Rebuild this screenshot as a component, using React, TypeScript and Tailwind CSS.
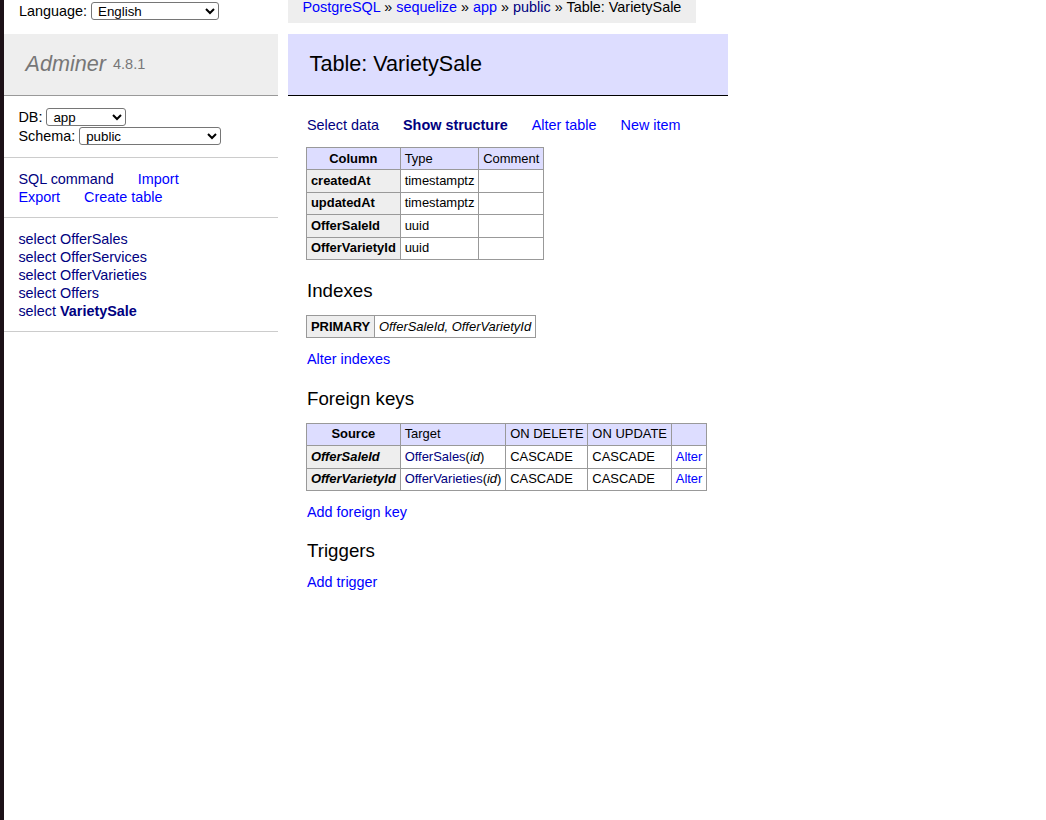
const tables = ["OfferSales", "OfferServices", "OfferVarieties", "Offers"];

const columns = [
  { name: "createdAt", type: "timestamptz" },
  { name: "updatedAt", type: "timestamptz" },
  { name: "OfferSaleId", type: "uuid" },
  { name: "OfferVarietyId", type: "uuid" },
];

const foreignKeys = [
  { source: "OfferSaleId", target: "OfferSales" },
  { source: "OfferVarietyId", target: "OfferVarieties" },
];

const cell = "border border-[#999] px-[3.9px] py-[2.6px] leading-[16.2px]";
const headCell = "border border-[#999] px-[6.5px] py-[2.6px] leading-[16.2px] bg-[#ddf]";
const select =
  "h-[18px] border border-[#767676] rounded-[3px] bg-white text-[13.33px] leading-[16px] pl-[2px] text-black";

export default function App() {
  return (
    <div
      className="flex min-h-[820px] bg-white text-[14.4px] leading-[18px] text-black"
      style={{ fontFamily: '"Liberation Sans", Arial, sans-serif' }}
    >
      <div className="w-[4px] shrink-0 bg-[#1c1117]" />

      {/* menu */}
      <aside className="w-[274px] shrink-0">
        <div className="h-[34px] pl-[15px] pt-[2px]">
          <label className="flex h-[18px] items-center gap-[4px]">
            Language:
            <select className={`${select} w-[128px]`} defaultValue="en">
              <option value="en">English</option>
            </select>
          </label>
        </div>
        <h1 className="flex h-[62px] items-center border-b border-[#999] bg-[#eee] px-[21.6px] pb-[1px] text-[21.6px] font-normal italic text-[#777]">
          Adminer
          <span className="ml-[7px] text-[14.47px] not-italic">4.8.1</span>
        </h1>
        <div className="border-b border-[#ccc] px-[14.4px] py-[11.5px] leading-[19px]">
          <div className="flex items-center gap-[4px]">
            DB:
            <select className={`${select} w-[80px]`} defaultValue="app">
              <option value="app">app</option>
            </select>
          </div>
          <div className="flex items-center gap-[4px]">
            Schema:
            <select className={`${select} w-[142px]`} defaultValue="public">
              <option value="public">public</option>
            </select>
          </div>
        </div>
        <div className="border-b border-[#ccc] px-[14.4px] py-[11.5px]">
          <div>
            <a className="mr-[24px] text-[#000080]">SQL command</a>
            <a className="text-[#00f]">Import</a>
          </div>
          <div>
            <a className="mr-[24px] text-[#00f]">Export</a>
            <a className="text-[#00f]">Create table</a>
          </div>
        </div>
        <div className="border-b border-[#ccc] px-[14.4px] py-[11.5px] text-[#000080]">
          {tables.map((t) => (
            <div key={t}>
              <a>select </a>
              <a>{t}</a>
            </div>
          ))}
          <div>
            <a>select </a>
            <a className="font-bold">VarietySale</a>
          </div>
        </div>
      </aside>

      <div className="w-[10px] shrink-0" />

      {/* content */}
      <main className="w-[440px] shrink-0">
        <div className="h-[23px] w-fit bg-[#eee] px-[14.4px] leading-[14px] whitespace-nowrap">
          <a className="text-[#00f]">PostgreSQL</a> » <a className="text-[#00f]">sequelize</a> »{" "}
          <a className="text-[#00f]">app</a> » <a className="text-[#000080]">public</a> » Table: VarietySale
        </div>
        <h2 className="mt-[11px] flex h-[62px] items-center border-b border-black bg-[#ddf] px-[21.6px] pb-[1px] text-[21.6px] font-normal">
          Table: VarietySale
        </h2>

        <div className="pl-[18px]">
          <p className="mt-[20px] pl-[1px]">
            <a className="mr-[24px] text-[#000080]">Select data</a>
            <span className="mr-[24px] font-bold text-[#000080]">Show structure</span>
            <a className="mr-[24px] text-[#00f]">Alter table</a>
            <a className="text-[#00f]">New item</a>
          </p>

          <table className="mt-[13px] border-collapse text-[12.96px]">
            <thead>
              <tr>
                <th className={`${headCell} text-center font-bold`}>Column</th>
                <td className={`${cell} bg-[#ddf]`}>Type</td>
                <td className={`${cell} bg-[#ddf]`}>Comment</td>
              </tr>
            </thead>
            <tbody>
              {columns.map((c) => (
                <tr key={c.name}>
                  <th className={`${cell} bg-[#eee] text-left font-bold`}>{c.name}</th>
                  <td className={cell}>{c.type}</td>
                  <td className={cell}></td>
                </tr>
              ))}
            </tbody>
          </table>

          <h3 className="mt-[18.7px] pl-[1px] text-[18.72px] leading-[23.4px]">Indexes</h3>
          <table className="mt-[13px] border-collapse text-[12.96px]">
            <tbody>
              <tr>
                <th className={`${cell} bg-[#eee] text-left font-bold`}>PRIMARY</th>
                <td className={`${cell} italic`}>OfferSaleId, OfferVarietyId</td>
              </tr>
            </tbody>
          </table>
          <p className="mt-[12px] pl-[1px]">
            <a className="text-[#00f]">Alter indexes</a>
          </p>

          <h3 className="mt-[19px] pl-[1px] text-[18.72px] leading-[23.4px]">Foreign keys</h3>
          <table className="mt-[12px] border-collapse text-[12.96px]">
            <thead>
              <tr>
                <th className={`${headCell} text-center font-bold`}>Source</th>
                <td className={`${cell} bg-[#ddf]`}>Target</td>
                <td className={`${cell} bg-[#ddf]`}>ON DELETE</td>
                <td className={`${cell} bg-[#ddf]`}>ON UPDATE</td>
                <td className={`${cell} bg-[#ddf]`}></td>
              </tr>
            </thead>
            <tbody>
              {foreignKeys.map((fk) => (
                <tr key={fk.source}>
                  <th className={`${cell} bg-[#eee] text-left font-bold italic`}>{fk.source}</th>
                  <td className={cell}>
                    <a className="text-[#000080]">{fk.target}</a>(<i>id</i>)
                  </td>
                  <td className={cell}>CASCADE</td>
                  <td className={cell}>CASCADE</td>
                  <td className={cell}>
                    <a className="text-[#00f]">Alter</a>
                  </td>
                </tr>
              ))}
            </tbody>
          </table>
          <p className="mt-[12px] pl-[1px]">
            <a className="text-[#00f]">Add foreign key</a>
          </p>

          <h3 className="mt-[18px] pl-[1px] text-[18.72px] leading-[23.4px]">Triggers</h3>
          <p className="mt-[10.4px] pl-[1px]">
            <a className="text-[#00f]">Add trigger</a>
          </p>
        </div>
      </main>
    </div>
  );
}
